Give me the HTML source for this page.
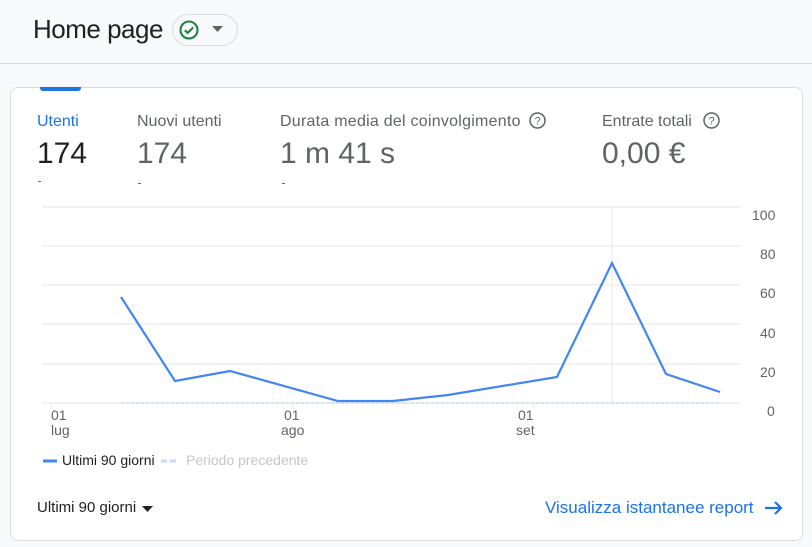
<!DOCTYPE html>
<html><head><style>
body{margin:0;width:812px;height:547px;background:#f8f9fa;font-family:"Liberation Sans",Arial,sans-serif;position:relative;overflow:hidden}
.a{position:absolute;white-space:nowrap}
</style></head><body>
<div class="a" style="left:0;top:0;width:812px;height:63px;background:#f8f9fa;border-bottom:1px solid #dadce0"></div>
<div class="a" style="left:33px;top:14px;font-size:26px;color:#202124;letter-spacing:-0.5px">Home page</div>
<div class="a" style="left:172px;top:14px;width:64px;height:30px;border:1px solid #dadce0;border-radius:16px;background:#f8f9fa"></div>
<svg class="a" style="left:178px;top:19px" width="22" height="22" viewBox="0 0 22 22"><circle cx="11" cy="11" r="8.5" fill="none" stroke="#188038" stroke-width="2"/><path d="M6.8 11.2l2.8 2.8 5.6-5.6" fill="none" stroke="#188038" stroke-width="2"/></svg>
<svg class="a" style="left:212px;top:26px" width="12" height="7"><path d="M0 0h11l-5.5 6z" fill="#5f6368"/></svg>
<div class="a" style="left:10px;top:87px;width:791px;height:452px;background:#fff;border:1px solid #dadce0;border-radius:8px"></div>
<div class="a" style="left:40px;top:87px;width:41px;height:4px;background:#1a73e8;border-radius:0 0 3px 3px"></div>
<div class="a" style="left:37px;top:113px;font-size:16px;color:#1a73e8">Utenti</div>
<div class="a" style="left:37px;top:137px;font-size:30px;color:#202124">174</div>
<div class="a" style="left:38px;top:181px;width:3px;height:1px;background:#1a73e8"></div>
<div class="a" style="left:137px;top:113px;font-size:16px;color:#5f6368">Nuovi utenti</div>
<div class="a" style="left:137px;top:137px;font-size:30px;color:#5f6368">174</div>
<div class="a" style="left:138px;top:183px;width:3px;height:1px;background:#5f6368"></div>
<div class="a" style="left:280px;top:113px;font-size:16px;color:#5f6368;letter-spacing:0.25px">Durata media del coinvolgimento</div>
<div class="a" style="left:280px;top:137px;font-size:30px;color:#5f6368">1 m 41 s</div>
<div class="a" style="left:282px;top:183px;width:3px;height:1px;background:#5f6368"></div>
<div class="a" style="left:602px;top:113px;font-size:16px;color:#5f6368">Entrate totali</div>
<div class="a" style="left:602px;top:137px;font-size:30px;color:#5f6368">0,00 €</div>
<svg class="a" style="left:528px;top:111px" width="19" height="19"><circle cx="9.5" cy="9.5" r="7.5" fill="none" stroke="#5f6368" stroke-width="1.5"/><text x="9.5" y="13.5" font-size="11" text-anchor="middle" fill="#5f6368" font-family="Liberation Sans">?</text></svg>
<svg class="a" style="left:702px;top:111px" width="19" height="19"><circle cx="9.5" cy="9.5" r="7.5" fill="none" stroke="#5f6368" stroke-width="1.5"/><text x="9.5" y="13.5" font-size="11" text-anchor="middle" fill="#5f6368" font-family="Liberation Sans">?</text></svg>
<svg class="a" style="left:0;top:0" width="812" height="547">
<g stroke="#ebebeb" stroke-width="1.2">
<line x1="42" y1="207" x2="740" y2="207"/><line x1="42" y1="246" x2="740" y2="246"/><line x1="42" y1="285" x2="740" y2="285"/><line x1="42" y1="324" x2="740" y2="324"/><line x1="42" y1="364" x2="740" y2="364"/><line x1="42" y1="403" x2="740" y2="403"/>
<line x1="612" y1="207" x2="612" y2="403"/>
<line x1="51" y1="403" x2="51" y2="409"/><line x1="293" y1="403" x2="293" y2="409"/><line x1="534" y1="403" x2="534" y2="409"/>
</g>
<line x1="121" y1="403" x2="720" y2="403" stroke="#c6dafc" stroke-width="1.5" stroke-dasharray="3,2"/>
<polyline points="121,297 175,381 230,371 338,401 393,401 448,395 557,377 612,263 666,374 720,392" fill="none" stroke="#4285f4" stroke-width="2.2"/>
<g font-family="Liberation Sans" font-size="14" fill="#5f6368">
<text x="752" y="220">100</text><text x="760" y="259">80</text><text x="760" y="298">60</text><text x="760" y="338">40</text><text x="760" y="377">20</text><text x="767" y="416">0</text>
<text x="51" y="420">01</text><text x="51" y="435">lug</text>
<text x="284" y="420">01</text><text x="281" y="435">ago</text>
<text x="518" y="420">01</text><text x="516" y="435">set</text>
</g>
<line x1="43" y1="461" x2="57" y2="461" stroke="#4285f4" stroke-width="3"/>
<line x1="161" y1="461" x2="179" y2="461" stroke="#c6dafc" stroke-width="3" stroke-dasharray="6,3"/>
<path d="M765 508h16M775 502l6 6-6 6" fill="none" stroke="#1a73e8" stroke-width="2.2"/>
<path d="M142 506h11l-5.5 6z" fill="#202124"/>
</svg>
<div class="a" style="left:62px;top:452px;font-size:14px;color:#202124">Ultimi 90 giorni</div>
<div class="a" style="left:186px;top:452px;font-size:14px;color:#c4c7c5">Periodo precedente</div>
<div class="a" style="left:37px;top:499px;font-size:15px;color:#202124">Ultimi 90 giorni</div>
<div class="a" style="left:545px;top:498px;font-size:17px;color:#1a73e8">Visualizza istantanee report</div>
</body></html>
